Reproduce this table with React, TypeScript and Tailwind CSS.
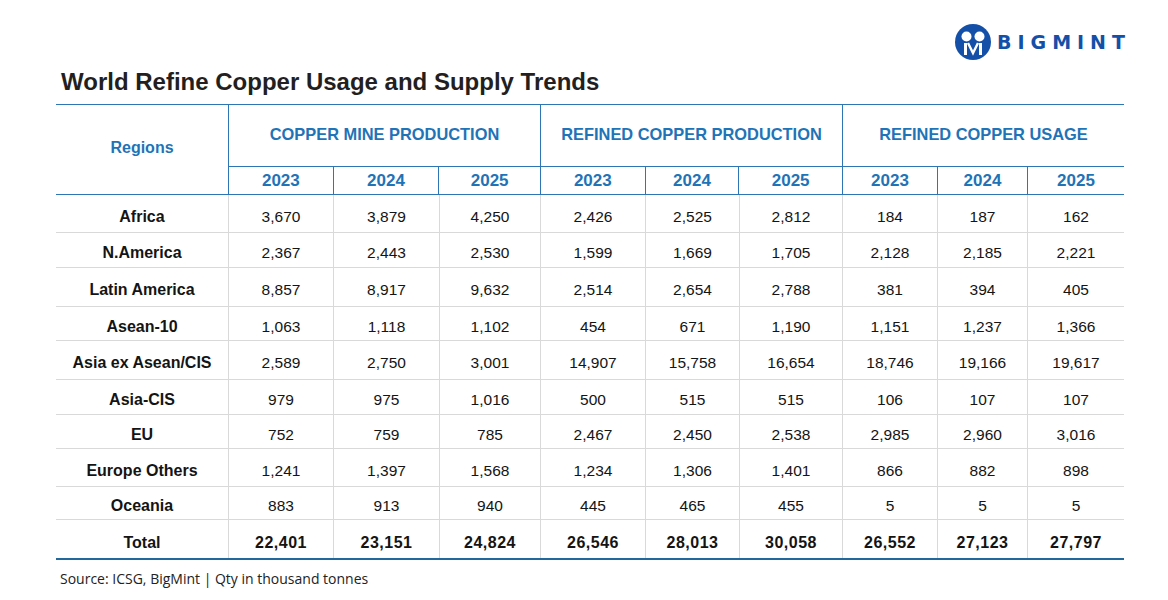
import React from 'react';

const groups = [
  { title: 'COPPER MINE PRODUCTION', widths: [105, 106, 101] },
  { title: 'REFINED COPPER PRODUCTION', widths: [105, 94, 103] },
  { title: 'REFINED COPPER USAGE', widths: [95, 90, 96] },
];

const colWidths = groups.flatMap((g) => g.widths);

const rows: { region: string; h: number; values: string[] }[] = [
  { region: 'Africa', h: 38, values: ['3,670', '3,879', '4,250', '2,426', '2,525', '2,812', '184', '187', '162'] },
  { region: 'N.America', h: 35, values: ['2,367', '2,443', '2,530', '1,599', '1,669', '1,705', '2,128', '2,185', '2,221'] },
  { region: 'Latin America', h: 39, values: ['8,857', '8,917', '9,632', '2,514', '2,654', '2,788', '381', '394', '405'] },
  { region: 'Asean-10', h: 34, values: ['1,063', '1,118', '1,102', '454', '671', '1,190', '1,151', '1,237', '1,366'] },
  { region: 'Asia ex Asean/CIS', h: 39, values: ['2,589', '2,750', '3,001', '14,907', '15,758', '16,654', '18,746', '19,166', '19,617'] },
  { region: 'Asia-CIS', h: 35, values: ['979', '975', '1,016', '500', '515', '515', '106', '107', '107'] },
  { region: 'EU', h: 34, values: ['752', '759', '785', '2,467', '2,450', '2,538', '2,985', '2,960', '3,016'] },
  { region: 'Europe Others', h: 38, values: ['1,241', '1,397', '1,568', '1,234', '1,306', '1,401', '866', '882', '898'] },
  { region: 'Oceania', h: 33, values: ['883', '913', '940', '445', '465', '455', '5', '5', '5'] },
];

const totals = ['22,401', '23,151', '24,824', '26,546', '28,013', '30,058', '26,552', '27,123', '27,797'];

function Logo() {
  return (
    <div className="flex items-center gap-[6px]">
      <svg width="36" height="36" viewBox="0 0 36 36">
        <circle cx="18" cy="18" r="18" fill="#1450a8" />
        <circle cx="11.5" cy="12.5" r="5" fill="#fff" />
        <circle cx="24.5" cy="12.5" r="5" fill="#fff" />
        <path d="M10.5 19 L10.5 31" stroke="#fff" strokeWidth="3" fill="none" />
        <path d="M25.5 19 L25.5 31" stroke="#fff" strokeWidth="3" fill="none" />
        <path d="M13 19 L18 29 L23 19" stroke="#fff" strokeWidth="2.4" fill="none" strokeLinejoin="miter" />
      </svg>
      <span className="font-['DejaVu_Sans',sans-serif] font-bold text-[19px] leading-none tracking-[6px] text-[#1450a8] mr-[-6px]">
        BIGMINT
      </span>
    </div>
  );
}

export default function App() {
  return (
    <div className="w-[1168px] h-[600px] bg-white font-['Liberation_Sans',Arial,sans-serif] overflow-hidden">
      <div className="flex justify-end pt-[24px] pr-[43px]">
        <Logo />
      </div>

      <h1 className="mt-[8px] pl-[61px] text-[24px] leading-[28px] font-bold text-[#231f20]">
        World Refine Copper Usage and Supply Trends
      </h1>

      <div className="ml-[56px] mt-[8px] w-[1068px]">
        {/* header */}
        <div className="flex border-t border-b border-[#2c76b6] text-[#1f73b7] font-bold">
          <div className="w-[173px] shrink-0 border-r border-[#2c76b6] flex items-center justify-center pb-[4px] text-[16px]">
            Regions
          </div>
          {groups.map((g, gi) => (
            <div
              key={g.title}
              className={`flex flex-col ${gi < groups.length - 1 ? 'border-r border-[#2c76b6]' : ''}`}
              style={{ width: g.widths.reduce((a, b) => a + b, 0) }}
            >
              <div className="h-[62px] border-b border-[#2c76b6] flex items-center justify-center pb-[2px] text-[16.4px]">
                {g.title}
              </div>
              <div className="h-[27px] flex">
                {g.widths.map((w, i) => (
                  <div
                    key={i}
                    className={`flex items-center justify-center text-[17px] ${i < g.widths.length - 1 ? 'border-r border-[#2c76b6]' : ''}`}
                    style={{ width: w }}
                  >
                    {['2023', '2024', '2025'][i]}
                  </div>
                ))}
              </div>
            </div>
          ))}
        </div>

        {/* body */}
        {rows.map((r) => (
          <div key={r.region} className="flex border-b border-[#d9d9d9] text-[#141414]" style={{ height: r.h }}>
            <div className="w-[173px] shrink-0 border-r border-[#d9d9d9] flex items-center justify-center pt-[6px] text-[16px] font-bold">
              {r.region}
            </div>
            {r.values.map((v, i) => (
              <div
                key={i}
                className={`flex items-center justify-center pt-[6px] text-[15.5px] ${i < r.values.length - 1 ? 'border-r border-[#d9d9d9]' : ''}`}
                style={{ width: colWidths[i] }}
              >
                {v}
              </div>
            ))}
          </div>
        ))}

        <div className="flex h-[40px] border-b-2 border-[#22689a] text-[#141414] font-bold">
          <div className="w-[173px] shrink-0 border-r border-[#d9d9d9] flex items-center justify-center pt-[7px] text-[16px]">
            Total
          </div>
          {totals.map((v, i) => (
            <div
              key={i}
              className={`flex items-center justify-center pt-[7px] text-[16px] tracking-[0.5px] ${i < totals.length - 1 ? 'border-r border-[#d9d9d9]' : ''}`}
              style={{ width: colWidths[i] }}
            >
              {v}
            </div>
          ))}
        </div>
      </div>

      <p className="mt-[10px] pl-[60px] font-['Open_Sans',sans-serif] text-[14px] leading-[18px] text-[#222]">
        Source: ICSG, BigMint | Qty in thousand tonnes
      </p>
    </div>
  );
}
